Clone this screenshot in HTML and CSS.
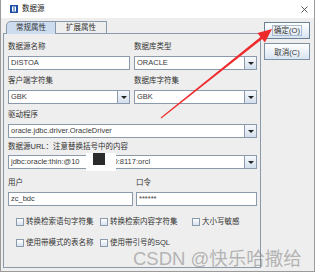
FILE: index.html
```html
<!DOCTYPE html>
<html lang="zh">
<head>
<meta charset="utf-8">
<title>数据源</title>
<link rel="stylesheet" href="styles.css">
</head>
<body>
<div class="window">
  <div class="titlebar">
    <svg class="app-icon" width="8" height="8" viewBox="0 0 8 8"><rect x="0" y="0" width="8" height="8" fill="#1f4fa6"/><rect x="2" y="1.5" width="4" height="5" fill="#fff"/><rect x="3" y="2.5" width="2" height="1" fill="#1f4fa6"/><rect x="3" y="4.5" width="2" height="1" fill="#1f4fa6"/></svg>
    <span class="title">数据源</span>
    <svg class="close" width="7" height="7" viewBox="0 0 7 7"><path d="M0.5 0.5L6.5 6.5M6.5 0.5L0.5 6.5" stroke="#444" stroke-width="0.9"/></svg>
  </div>
  <div class="content">
    <div class="main">
      <div class="tabs">
        <div class="tab active">常规属性</div>
        <div class="tab">扩展属性</div>
      </div>
      <div class="panel">
        <div class="row cols">
          <div class="group"><div class="label">数据源名称</div><div class="field">DISTOA</div></div>
          <div class="group"><div class="label">数据库类型</div><div class="field combo"><span class="val">ORACLE</span><span class="arrow"></span></div></div>
        </div>
        <div class="row cols">
          <div class="group"><div class="label">客户端字符集</div><div class="field combo"><span class="val">GBK</span><span class="arrow"></span></div></div>
          <div class="group"><div class="label">数据库字符集</div><div class="field combo"><span class="val">GBK</span><span class="arrow"></span></div></div>
        </div>
        <div class="row row-driver">
          <div class="group"><div class="label">驱动程序</div><div class="field combo"><span class="val">oracle.jdbc.driver.OracleDriver</span><span class="arrow"></span></div></div>
        </div>
        <div class="row row-url">
          <div class="group"><div class="label">数据源URL：注意替换括号中的内容</div><div class="field combo"><span class="val">jdbc:oracle:thin:@10</span><span class="val url-tail">0:8117:orcl</span><span class="arrow"></span></div></div>
        </div>
        <div class="row cols cols-user">
          <div class="group"><div class="label">用户</div><div class="field">zc_bdc</div></div>
          <div class="group"><div class="label">口令</div><div class="field">******</div></div>
        </div>
        <div class="checks">
          <div class="check-row">
            <label class="check"><span class="box"></span>转换检索语句字符集</label>
            <label class="check"><span class="box"></span>转换检索内容字符集</label>
            <label class="check"><span class="box"></span>大小写敏感</label>
          </div>
          <div class="check-row">
            <label class="check"><span class="box"></span>使用带模式的表名称</label>
            <label class="check"><span class="box"></span>使用带引号的SQL</label>
          </div>
        </div>
      </div>
    </div>
    <div class="buttons">
      <div class="btn default"><span class="focus">确定(O)</span></div>
      <div class="btn">取消(C)</div>
    </div>
  </div>
</div>
<div class="redact"><span class="redact-box"></span></div>
<svg class="arrow-overlay" width="319" height="274" viewBox="0 0 319 274">
  <polygon points="161.3,118.4 160.7,117.6 261.1,36.4 262.9,38.6" fill="#ee2a2a"/>
  <polygon points="272,29 264.9,42.4 257.4,33.1" fill="#ee2a2a"/>
</svg>
<div class="watermark">CSDN @快乐哈撒给</div>
</body>
</html>
```
FILE: styles.css
```css
html, body {
  margin: 0;
  padding: 0;
  background: #ffffff;
}
body {
  position: relative;
  width: 319px;
  height: 274px;
  overflow: hidden;
  font-family: "Liberation Sans", "Noto Sans CJK SC", sans-serif;
  font-size: 7.5px;
  color: #333333;
}
.window {
  width: 315px;
  height: 272px;
  box-sizing: border-box;
  background: #eeeeee;
  border: 1px solid #9a9a9a;
  border-top: none;
}
.titlebar {
  height: 18px;
  background: #ffffff;
  display: flex;
  align-items: center;
  padding-left: 9px;
}
.app-icon {
  display: block;
  margin-right: 4px;
}
.title {
  color: #222222;
  line-height: 10px;
}
.close {
  display: block;
  margin-left: auto;
  margin-right: 6px;
}
.content {
  display: flex;
  gap: 3px;
  padding: 3px 0 0 2px;
}
.main {
  width: 258px;
}
.tabs {
  display: flex;
  align-items: flex-start;
  height: 13px;
  padding-left: 3px;
  margin-bottom: -1px;
  position: relative;
  z-index: 1;
}
.tab {
  box-sizing: border-box;
  height: 12px;
  width: 52px;
  margin-left: -1px;
  border: 1px solid #8a9aab;
  border-bottom: none;
  background: #eeeeee;
  text-align: center;
  line-height: 11px;
  color: #333333;
}
.tab.active {
  width: 50px;
  margin-left: 0;
  height: 13px;
  background: #cddcee;
  border-top-left-radius: 5px;
}
.panel {
  box-sizing: border-box;
  height: 235px;
  border: 1px solid #8a9aab;
  background: #eeeeee;
  padding: 8px 3px 0 4px;
}
.row {
  margin-bottom: 6px;
}
.row-driver {
  margin-bottom: 4px;
}
.row-url {
  margin-bottom: 9px;
}
.row-url .label {
  margin-bottom: 3px;
}
.cols {
  display: grid;
  grid-template-columns: 122px 1fr;
  column-gap: 4px;
}
.cols-user {
  grid-template-columns: 125px 1fr;
  column-gap: 3px;
}
.group {
  display: flex;
  flex-direction: column;
}
.label {
  height: 10px;
  line-height: 10px;
  margin-bottom: 4px;
  white-space: nowrap;
  color: #333333;
}
.field {
  box-sizing: border-box;
  height: 14px;
  border: 1px solid #8a9aab;
  background: #ffffff;
  display: flex;
  align-items: center;
  padding-left: 2px;
  line-height: 12px;
  white-space: nowrap;
  color: #3a3a3a;
}
.combo {
  padding-right: 0;
}
.url-tail {
  margin-left: 34px;
}
.arrow {
  margin-left: auto;
  width: 12px;
  height: 12px;
  box-sizing: border-box;
  border-left: 1px solid #8a9aab;
  background: linear-gradient(#f6f9fc, #d3dfed);
  display: flex;
  align-items: center;
  justify-content: center;
}
.arrow::after {
  content: "";
  display: block;
  width: 0;
  height: 0;
  border-left: 3px solid transparent;
  border-right: 3px solid transparent;
  border-top: 3px solid #222222;
}
.checks {
  margin-top: 11px;
}
.check-row {
  display: grid;
  grid-template-columns: 84px 92px 1fr;
  padding-left: 8px;
  height: 10px;
}
.check-row + .check-row {
  margin-top: 11px;
}
.check {
  display: flex;
  align-items: center;
  gap: 2px;
  height: 10px;
  line-height: 10px;
  white-space: nowrap;
  color: #333333;
}
.box {
  box-sizing: border-box;
  width: 8px;
  height: 8px;
  border: 1px solid #8a9aab;
  background: linear-gradient(#ffffff, #d6e2f0);
  flex: none;
}
.buttons {
  display: flex;
  flex-direction: column;
  gap: 4px;
  padding-top: 1px;
}
.btn {
  box-sizing: border-box;
  width: 46px;
  height: 17px;
  border: 1px solid #7e90a4;
  background: linear-gradient(#ffffff, #d8e4f1);
  display: flex;
  align-items: center;
  justify-content: center;
  color: #333333;
  white-space: nowrap;
}
.btn.default {
  border-color: #6b7f96;
}
.focus {
  border: 1px solid #a9bad0;
  padding: 0 1px;
  line-height: 9px;
}
.redact {
  position: absolute;
  left: 86px;
  top: 153px;
  width: 30px;
  height: 18px;
  background: #ffffff;
}
.redact-box {
  position: absolute;
  left: 7px;
  top: 0;
  width: 12px;
  height: 12px;
  background: #2b2b2b;
}
.arrow-overlay {
  position: absolute;
  left: 0;
  top: 0;
}
.watermark {
  position: absolute;
  left: 133px;
  top: 249px;
  font-family: "Liberation Sans", "Noto Sans CJK SC", sans-serif;
  font-size: 18.5px;
  line-height: 20px;
  color: rgba(120, 120, 120, 0.5);
  white-space: nowrap;
}
```
